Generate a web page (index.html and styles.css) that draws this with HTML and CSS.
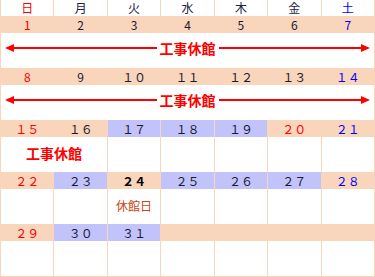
FILE: index.html
```html
<!DOCTYPE html>
<html lang="ja">
<head>
<meta charset="utf-8">
<link rel="stylesheet" href="styles.css">
</head>
<body>
<div class="cal">
  <div class="hd sun">日</div>
  <div class="hd">月</div>
  <div class="hd">火</div>
  <div class="hd">水</div>
  <div class="hd">木</div>
  <div class="hd">金</div>
  <div class="hd sat">土</div>

  <div class="d sun">1</div>
  <div class="d">2</div>
  <div class="d">3</div>
  <div class="d">4</div>
  <div class="d">5</div>
  <div class="d">6</div>
  <div class="d sat">7</div>
  <div class="ev span7 arrow">
    <span class="head left"></span><span class="line"></span><span class="label">工事休館</span><span class="line"></span><span class="head right"></span>
  </div>

  <div class="d sun">8</div>
  <div class="d">9</div>
  <div class="d">１０</div>
  <div class="d">１１</div>
  <div class="d">１２</div>
  <div class="d">１３</div>
  <div class="d sat">１４</div>
  <div class="ev span7 arrow">
    <span class="head left"></span><span class="line"></span><span class="label">工事休館</span><span class="line"></span><span class="head right"></span>
  </div>

  <div class="d sun">１５</div>
  <div class="d">１６</div>
  <div class="d hl">１７</div>
  <div class="d hl">１８</div>
  <div class="d hl">１９</div>
  <div class="d sun">２０</div>
  <div class="d sat">２１</div>
  <div class="ev span2"><span class="label">工事休館</span></div>
  <div class="ev"></div>
  <div class="ev"></div>
  <div class="ev"></div>
  <div class="ev"></div>
  <div class="ev"></div>

  <div class="d sun">２２</div>
  <div class="d hl">２３</div>
  <div class="d today">２４</div>
  <div class="d hl">２５</div>
  <div class="d hl">２６</div>
  <div class="d hl">２７</div>
  <div class="d sat">２８</div>
  <div class="ev"></div>
  <div class="ev"></div>
  <div class="ev"><span class="closed">休館日</span></div>
  <div class="ev"></div>
  <div class="ev"></div>
  <div class="ev"></div>
  <div class="ev"></div>

  <div class="d sun">２９</div>
  <div class="d hl">３０</div>
  <div class="d hl">３１</div>
  <div class="d"></div>
  <div class="d"></div>
  <div class="d"></div>
  <div class="d"></div>
  <div class="ev"></div>
  <div class="ev"></div>
  <div class="ev"></div>
  <div class="ev"></div>
  <div class="ev"></div>
  <div class="ev"></div>
  <div class="ev"></div>
</div>
</body>
</html>
```
FILE: styles.css
```css
html, body {
  margin: 0;
  padding: 0;
  background: #ffffff;
}
body {
  font-family: "Noto Sans CJK JP", "Noto Sans", sans-serif;
  width: 375px;
  height: 277px;
  overflow: hidden;
}
.cal {
  display: grid;
  grid-template-columns: repeat(7, 1fr);
  grid-template-rows: 16px repeat(5, 17px 35px);
  column-gap: 1px;
  row-gap: 0;
  padding: 0 1px 1px 1px;
  background: #f8d5bb;
  width: 375px;
  box-sizing: border-box;
}
.hd {
  background: #ffffff;
  color: #222244;
  font-size: 12px;
  line-height: 16px;
  text-align: center;
}
.d {
  background: #f8d5bb;
  color: #1a1a33;
  font-size: 12px;
  line-height: 17px;
  text-align: center;
}
.hl {
  background: #c3c3fb;
}
.sun {
  color: #ff0000;
}
.sat {
  color: #0000ff;
}
.today {
  color: #000000;
  font-weight: bold;
}
.ev {
  background: #ffffff;
  display: flex;
  align-items: center;
  justify-content: center;
  padding-bottom: 4px;
  box-sizing: border-box;
}
.span7 {
  grid-column: span 7;
}
.span2 {
  grid-column: span 2;
}
.label {
  color: #ff0000;
  font-weight: bold;
  font-size: 14px;
  line-height: 16px;
  white-space: nowrap;
}
.arrow {
  padding: 0 4px 5px 4px;
}
.arrow .label {
  padding: 0 3px;
}
.line {
  flex: 1;
  height: 2px;
  background: #ff0000;
}
.head {
  width: 0;
  height: 0;
  border-top: 4px solid transparent;
  border-bottom: 4px solid transparent;
}
.head.left {
  border-right: 9px solid #ff0000;
}
.head.right {
  border-left: 9px solid #ff0000;
}
.closed {
  color: #cc4411;
  font-size: 12px;
  line-height: 14px;
  padding-top: 2px;
}
```
